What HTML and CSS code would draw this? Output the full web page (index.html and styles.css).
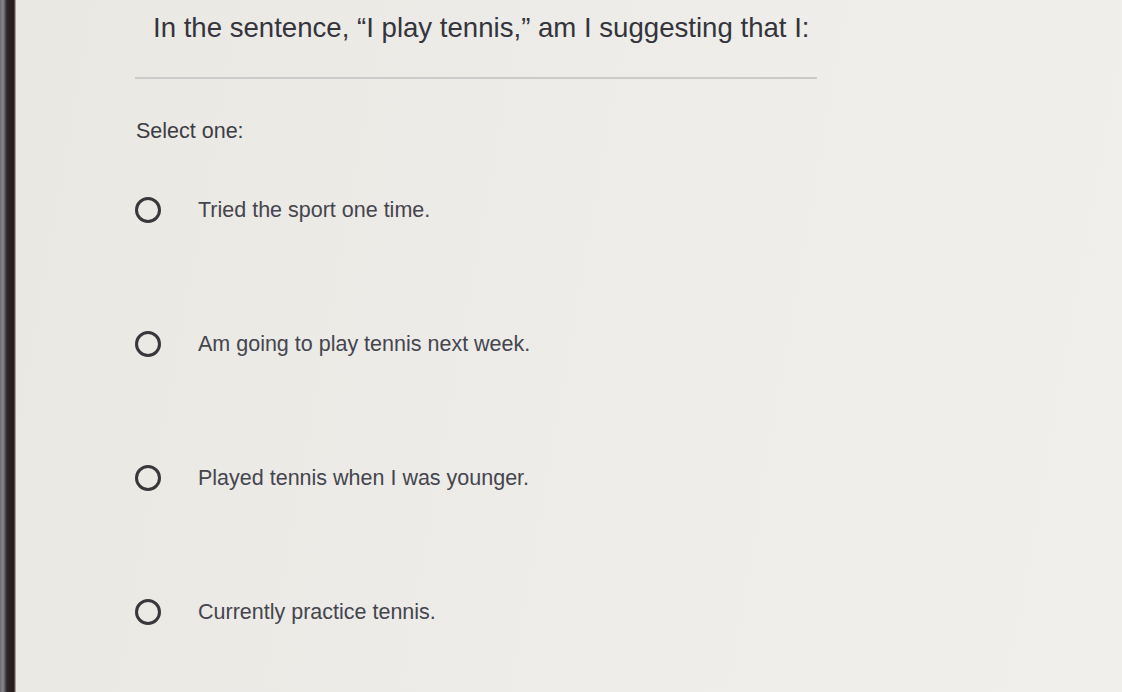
FILE: index.html
```html
<!DOCTYPE html>
<html>
<head>
<meta charset="utf-8">
<link rel="stylesheet" href="styles.css">
</head>
<body>
<div class="page">
  <div class="edge"></div>
  <main class="quiz">
    <h1 class="question">In the sentence, “I play tennis,” am I suggesting that I:</h1>
    <hr class="rule">
    <p class="prompt">Select one:</p>
    <ul class="options">
      <li class="option"><span class="radio"></span><span class="label">Tried the sport one time.</span></li>
      <li class="option"><span class="radio"></span><span class="label">Am going to play tennis next week.</span></li>
      <li class="option"><span class="radio"></span><span class="label">Played tennis when I was younger.</span></li>
      <li class="option"><span class="radio"></span><span class="label">Currently practice tennis.</span></li>
    </ul>
  </main>
</div>
</body>
</html>
```
FILE: styles.css
```css
html, body {
  margin: 0;
  padding: 0;
  height: 100%;
}
body {
  font-family: "Liberation Sans", Arial, sans-serif;
  background: linear-gradient(100deg, #e9e8e3 0%, #ecebe7 40%, #efeeeb 70%, #f0efec 100%);
  overflow: hidden;
}
.page {
  display: flex;
  height: 692px;
}
.edge {
  width: 16px;
  flex: none;
  background: linear-gradient(90deg, #6a6a6e 0px, #8a8a8e 3px, #55555a 5px, #2c2426 7px, #231b1c 14px, #cfcac0 16px);
}
.quiz {
  margin-left: 119px;
  width: 682px;
}
.question {
  margin: 10px 0 0 18px;
  font-size: 27.6px;
  font-weight: normal;
  color: #34343c;
  line-height: 36px;
  white-space: nowrap;
}
.rule {
  margin: 31px 0 0 0;
  border: 0;
  height: 2px;
  background: #cbcbcb;
}
.prompt {
  margin: 39px 0 0 1px;
  font-size: 21.5px;
  line-height: 26px;
  color: #3c3c44;
}
.options {
  list-style: none;
  margin: 53px 0 0 0;
  padding: 0;
  display: flex;
  flex-direction: column;
  gap: 108px;
}
.option {
  display: flex;
  align-items: center;
  height: 26px;
}
.radio {
  width: 20px;
  height: 20px;
  border: 3px solid #38383c;
  border-radius: 50%;
  flex: none;
}
.label {
  margin-left: 37px;
  font-size: 21.5px;
  color: #45454e;
}
```
